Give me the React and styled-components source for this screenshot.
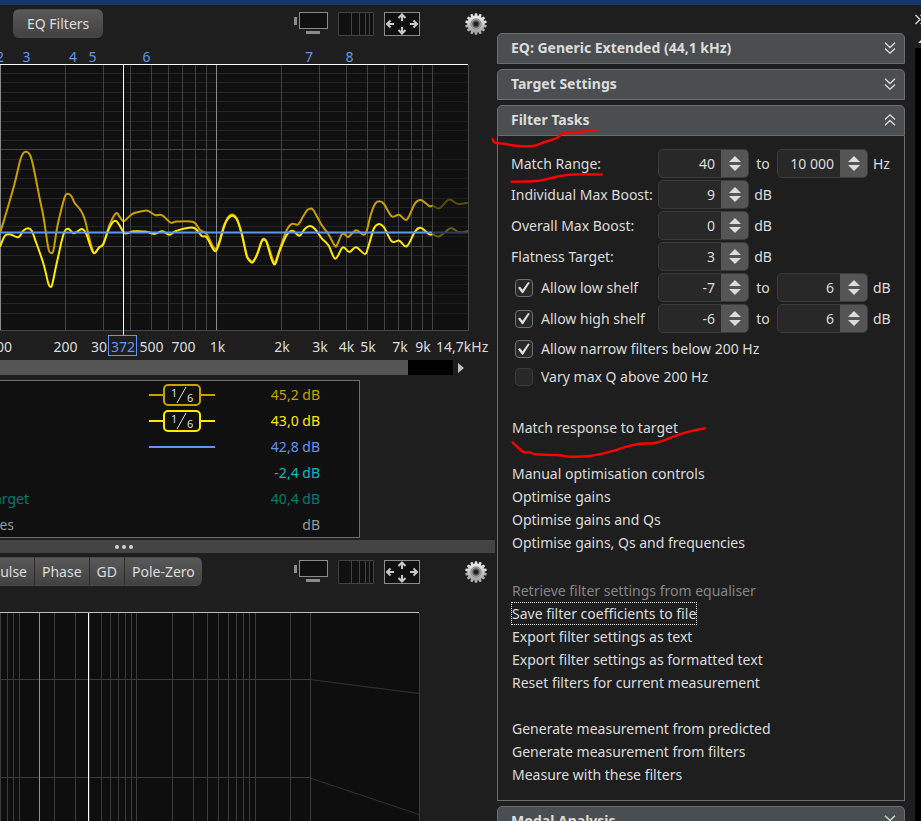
import React, { useState } from 'react'
import styled, { createGlobalStyle } from 'styled-components'

const GlobalStyle = createGlobalStyle`
*{
  box-sizing: border-box;
}
html,body{
  margin: 0;
  padding: 0;
  background: #1e1e1e;
}
body,button,input,table{
  font-family: "Noto Sans", "Open Sans", sans-serif;
  font-size: 14px;
  line-height: 20px;
  color: #dcdcdc;
}
button{
  border: none;
  background: none;
  padding: 0;
  cursor: pointer;
}
svg{
  display: block;
}
`

const Page = styled.div`
height: 100vh;
overflow: hidden;
display: flex;
flex-direction: column;
`

const TitleStrip = styled.div`
flex: 0 0 5px;
background: #163a61;
`

const Workspace = styled.div`
flex: 1;
min-height: 0;
display: flex;
`

const Graphs = styled.main`
flex: 1;
min-width: 0;
display: flex;
flex-direction: column;
overflow: hidden;
`

const Toolbar = styled.div`
flex: 0 0 40px;
display: flex;
align-items: flex-start;
justify-content: space-between;
padding: 4px 10px 0 ${props => props.indent || '0'};
`

const ButtonGroup = styled.div`
display: flex;
overflow: hidden;
border-radius: ${props => props.joined ? '0 6px 6px 0' : '6px'};
`

const GraphButton = styled.button`
height: 29px;
padding: ${props => props.wide ? '0 14px' : '0 7px'};
background: linear-gradient(#595959, #414141);
border: 1px solid #4a4a4a;
border-width: 1px 0;
white-space: nowrap;

& + &{
  border-left: 1px solid #2c2c2c;
}
`

/* the first tab is scrolled partly out of view */
const CutButton = styled(GraphButton)`
width: 34px;
display: flex;
align-items: center;
justify-content: flex-end;
`

const ToolIcons = styled.div`
display: flex;
align-items: center;
gap: 10px;
padding-top: 3px;
`

const IconButton = styled.button`
display: block;
margin-left: ${props => props.apart ? '35px' : '0'};
`

const ChartSvg = styled.svg`
flex: none;
width: 100%;
height: auto;
font-family: "Noto Sans", "Open Sans", sans-serif;
font-size: 14px;
`

const ScrollRow = styled.div`
flex: none;
display: flex;
align-items: center;
height: 15px;
margin: 2px 33px 5px 0;
gap: 5px;
`

const ScrollTrack = styled.div`
flex: 1;
height: 15px;
background: #000;
`

const ScrollThumb = styled.div`
width: 90%;
height: 100%;
background: #555;
`

const Legend = styled.table`
flex: none;
align-self: flex-start;
width: 360px;
height: 158px;
border: 1px solid #6e6e6e;
border-left: none;
background: #101010;
border-spacing: 0;

td{
  height: 26px;
  padding: 2px 0 0;
}
`

const LegendName = styled.td`
width: 149px;
color: ${props => props.color};

span{
  display: flex;
  justify-content: flex-end;
  width: ${props => props.visible || 0}px;
}
`

const LegendSwatch = styled.td`
width: 66px;
`

const LegendValue = styled.td`
color: ${props => props.color};
text-align: right;

&&{
  padding-right: 39px;
}
`

const Splitter = styled.div`
flex: 0 0 13px;
display: flex;
align-items: center;
gap: 3px;
margin: 2px 2px 0 0;
padding-left: 115px;
background: #444;
`

const Dot = styled.i`
width: 4px;
height: 4px;
border-radius: 50%;
background: #d2d2d2;
`

const Side = styled.aside`
position: relative;
flex: 0 0 424px;
display: flex;
gap: 10px;
`

const Sections = styled.div`
flex: 1;
display: flex;
flex-direction: column;
gap: 5px;
padding-top: 28px;
`

const SectionHeader = styled.button`
flex: none;
width: 100%;
height: 31px;
display: flex;
align-items: center;
justify-content: space-between;
padding: 0 8px 2px 13px;
background: #4b4e50;
border: 1px solid #6d6d6d;
border-radius: 5px 5px 0 0;
font-weight: 700;
`

const SectionBody = styled.div`
padding: 13px 4px 14px 13px;
border: 1px solid #6d6d6d;
border-top: none;
`

const Fields = styled.div`
display: grid;
grid-template-columns: 147px 91px 28px 91px 1fr;
row-gap: 2px;
align-items: center;
`

const FieldLabel = styled.label`
white-space: nowrap;
`

const Mid = styled.span`
text-align: center;
`

const Unit = styled.span`
grid-column: 5;
padding-left: 5px;
`

const SpinBox = styled.div`
display: flex;
height: 29px;
border: 1px solid #3c3c3c;
border-radius: 5px;
background: #282828;
overflow: hidden;
`

const SpinInput = styled.input`
flex: 1;
min-width: 0;
border: none;
outline: none;
background: transparent;
padding: 0 6px 0 0;
text-align: right;
`

const Steps = styled.div`
width: 27px;
display: flex;
flex-direction: column;
align-items: center;
justify-content: center;
gap: 3px;
background: #555;
`

const Checks = styled.div`
padding-top: 2px;
`

const CheckRow = styled.div`
display: flex;
align-items: center;
gap: 8px;
height: ${props => props.tall ? '29px' : '28px'};
padding-left: 4px;
white-space: nowrap;
`

const CheckBox = styled.input`
appearance: none;
flex: none;
width: 18px;
height: 18px;
margin: 0;
border: 1px solid ${props => props.checked ? '#707070' : '#3a3a3a'};
border-radius: 4px;
background: #282828;
display: grid;
place-content: center;

&:checked::after{
  content: "";
  width: 12px;
  height: 12px;
  background: #dcdcdc;
  clip-path: polygon(0 52%, 16% 42%, 38% 68%, 84% 4%, 98% 10%, 42% 98%, 34% 98%);
}
`

const TaskGroup = styled.div`
display: flex;
flex-direction: column;
align-items: flex-start;
margin-top: ${props => props.spaced ? '25px' : '23px'};
`

const Task = styled.button`
height: 23px;
padding: 0 1px;
white-space: nowrap;

&:disabled{
  color: #858585;
}
`

const FocusedTask = styled(Task)`
outline: 1px dotted #fff;
outline-offset: -1px;
`

const Rail = styled.div`
flex: 0 0 6px;
display: flex;
flex-direction: column;
align-items: flex-start;
overflow: hidden;
`

const RailTrack = styled.div`
flex: 1;
width: 100%;
background: #000;
`

const Pen = styled.svg`
position: absolute;
left: -7px;
top: 0;
pointer-events: none;
`

const markers = [
  [26.5, '3'], [73, '4'], [92.5, '5'], [146.5, '6'], [309, '7'], [349.5, '8'],
]

const ticks = [
  [65.5, '200'], [151.5, '500'], [183.5, '700'], [217.5, '1k'], [282, '2k'], [320, '3k'],
  [346.5, '4k'], [368, '5k'], [400, '7k'], [423, '9k'],
]

const gridX = [65, 103, 130, 151, 168, 182, 195, 206, 281, 319, 346, 367, 384, 398, 411, 422, 432]

const gridX2 = [
  0, 7, 13, 19, 54, 75, 89, 101, 110, 118, 125, 131, 136, 172, 193, 207, 218, 228, 236, 243,
  249, 255, 290, 310, 419,
]

const gridY = Array.from({ length: 26 }, (_, k) => Math.round(72.5 + 9.62 * k))

const measured = [
  [0, 233], [5, 217], [10, 200], [15, 182], [20, 161], [23, 153.5], [26.5, 151.7], [30, 155], [33, 165],
  [40, 200], [43.5, 217], [48.3, 248], [51, 252.7], [53.5, 250], [57.3, 226.7], [63.3, 201.7],
  [65.7, 195], [68, 193.7], [71.3, 196], [74.7, 203], [81, 210.7], [85, 220], [89.3, 238.3],
  [94, 252.7], [99.3, 247], [103.3, 244], [110, 224], [116, 213.3], [120, 217.3], [124, 221.3],
  [131.7, 214.3], [141.7, 211.3], [147.7, 210.7], [155, 215], [162.3, 215.3], [170.7, 222.7],
  [176.7, 221.5], [193.3, 222], [200, 230], [206.7, 234], [214.3, 248.3], [218.3, 244], [225, 223],
  [231, 214.7], [236.7, 218.3], [241.7, 233.3], [246.7, 255], [250, 260], [252.7, 261.5],
  [256.7, 255], [261.7, 240.7], [264, 238.7], [266.7, 241.7], [274, 262.7], [276, 260],
  [281.7, 243.3], [286, 231.7], [289.3, 226], [292.7, 223.7], [298.3, 224.3], [303.3, 216],
  [307.3, 210], [310, 208.7], [313.3, 210], [321.7, 225], [328.3, 234], [335, 246], [337.3, 244.3],
  [341.7, 234.5], [345, 234.3], [348.3, 237], [356, 230.3], [363.3, 234.7], [366.7, 231],
  [370.7, 215], [375, 204], [379.3, 201.3], [384, 204], [391.7, 216.3], [399.3, 214.7],
  [406.7, 219.7], [415, 203.3], [420.7, 200], [426.7, 204], [430, 206.3], [432.7, 205.7],
]
const measuredTail = [
  [432.7, 205.7], [439.3, 208.3], [446.7, 201], [450.7, 199.7], [458.3, 204], [468, 202.7],
]

const predicted = [
  [0, 246.7], [5, 235.7], [10, 234.3], [18.3, 237.3], [23.3, 230.7], [28, 228.3], [31.7, 230.7],
  [35, 239.3], [43.3, 263.3], [48.3, 283.3], [50.3, 286.7], [52.3, 284], [56.7, 263.3],
  [63.3, 235], [68, 228.7], [74, 233.3], [81.7, 229], [86, 233.3], [90, 245], [94, 253.3],
  [99.3, 247.3], [103.3, 244], [108.3, 230], [112.7, 222.3], [116, 221], [119.3, 225],
  [125, 233.3], [133.3, 231.3], [146.7, 231.7], [154.3, 234], [162.3, 231.3], [169.3, 234.7],
  [176.7, 230.7], [193.3, 227.7], [201.7, 236], [206.7, 237.3], [214.3, 250.7], [218.3, 246],
  [225, 224], [231, 216], [236.7, 219.3], [241.7, 234], [246.7, 256], [250, 261.3],
  [252.7, 262.3], [256.7, 255.7], [261.7, 241.7], [264, 239.7], [266.7, 242.7], [274, 264.3],
  [280, 250], [286.7, 235], [292.7, 230.7], [299.3, 235.7], [305, 228.7], [310, 226], [315, 229],
  [321.7, 238.3], [328.3, 245], [335.3, 258.7], [342.7, 247.3], [349.3, 252], [356, 247.3],
  [365, 254], [368.3, 246.7], [374, 228.3], [379, 224], [384, 227.3], [391.7, 241.3],
  [399.3, 240.7], [406.7, 246.3], [415, 231.7], [420.7, 227.7], [429.3, 234.3], [432.7, 234],
]
const predictedTail = [
  [432.7, 234], [439.3, 236.3], [450.7, 228.3], [459, 232.3], [468, 231],
]

// smooth curve through the points
const spline = (pts) => {
  let d = `M${pts[0][0]} ${pts[0][1]}`
  for (let i = 0; i < pts.length - 1; i++) {
    const a = pts[i - 1] || pts[i]
    const b = pts[i]
    const c = pts[i + 1]
    const e = pts[i + 2] || c
    d += `C${b[0] + (c[0] - a[0]) / 6} ${b[1] + (c[1] - a[1]) / 6} ${c[0] - (e[0] - b[0]) / 6} ${c[1] - (e[1] - b[1]) / 6} ${c[0]} ${c[1]}`
  }
  return d
}

const ResponseChart = () => (
  <ChartSvg viewBox="0 45 497 313" role="img" aria-label="Frequency response">
    <g fill="#6495ed">
      <text x="4" y="62" textAnchor="end">2</text>
      {markers.map(([x, t]) => <text key={t} x={x} y="62" textAnchor="middle">{t}</text>)}
    </g>
    <rect x="0" y="64" width="469" height="267" fill="#101010" />
    <g shapeRendering="crispEdges" strokeWidth="1">
      {gridY.map((y, i) => i % 10 === 8
        ? <path key={y} d={`M0 ${y + .5}H432`} stroke="#454545" />
        : <g key={y}>
            <path d={`M0 ${y + .5}H432`} stroke="#242424" />
            <path d={`M432 ${y + .5}H468`} stroke="#1b1b1b" />
          </g>)}
      {gridX.map(x => <path key={x} d={`M${x + .5} 65V330`} stroke="#424242" />)}
      <path d="M.5 65V330M216.5 65V330" stroke="#8a8a8a" />
      <path d="M0 330.5H468.5V65" fill="none" stroke="#484848" />
      <path d="M0 64.5H468" stroke="#fff" />
    </g>
    <g fill="none" strokeWidth="2">
      <path d={spline(measured)} stroke="#c8a000" />
      <path d={spline(measuredTail)} stroke="#5b4b08" />
      <path d={spline(predicted)} stroke="#ffe900" />
      <path d={spline(predictedTail)} stroke="#6a6308" />
      <path d="M0 232.5H432" stroke="#6495ed" />
      <path d="M432 232.5H468" stroke="#2c3d5e" />
    </g>
    <path d="M123.5 65V335" stroke="#fff" shapeRendering="crispEdges" />
    <g fill="#dcdcdc">
      <text x="12" y="352" textAnchor="end">00</text>
      <text x="91" y="352">30</text>
      {ticks.map(([x, t]) => <text key={t} x={x} y="352" textAnchor="middle">{t}</text>)}
      <text x="436" y="352">14,7kHz</text>
    </g>
    <rect x="108.5" y="335.5" width="28" height="20" fill="#1e1e1e" stroke="#6495ed" />
    <text x="123" y="352" textAnchor="middle" fill="#6495ed">372</text>
  </ChartSvg>
)

const FilterChart = () => (
  <ChartSvg viewBox="0 593 497 240" role="img" aria-label="Filter response">
    <rect x="0" y="612" width="420" height="221" fill="#0e0e0e" />
    <g shapeRendering="crispEdges">
      {gridX2.map(x => <path key={x} d={`M${x + .5} 613V833`} stroke="#3b3b3b" />)}
      <path d="M0 679.5H310M0 777.5H310" stroke="#3b3b3b" />
      <path d="M39.5 613V833" stroke="#6495ed" />
      <path d="M88.5 613V833" stroke="#fff" />
      <path d="M0 612.5H419" stroke="#bdbdbd" />
    </g>
    <path d="M310 679.5L419 693.5M310 778L419 814.5" stroke="#333" />
  </ChartSvg>
)

const Gear = () => (
  <svg width="22" height="22" viewBox="-11 -11 22 22">
    <defs>
      <linearGradient id="steel" x1="0" y1="0" x2="0" y2="1">
        <stop offset="0" stopColor="#f0f0f0" />
        <stop offset="1" stopColor="#a2a2a2" />
      </linearGradient>
    </defs>
    {Array.from({ length: 14 }, (_, i) => (
      <path key={i} d="M-1.5 -8L-1.1 -10.8H1.1L1.5 -8Z" fill={i > 3 && i < 11 ? '#b0b0b0' : '#e4e4e4'} transform={`rotate(${i * 360 / 14})`} />
    ))}
    <circle r="8.6" fill="url(#steel)" />
    <circle r="5.2" fill="#a6a6a6" stroke="#8a8a8a" />
    <circle r="3" fill="#1e1e1e" stroke="#565656" strokeWidth="1.4" />
  </svg>
)

const GraphTools = () => (
  <ToolIcons>
    <IconButton aria-label="Capture graph">
      <svg width="34" height="24">
        <path d="M0 5h3v8H0zM12 19h14v3H12z" fill="#8a8a8a" />
        <rect x="5.5" y=".5" width="28" height="16" fill="#101010" stroke="#8a8a8a" />
      </svg>
    </IconButton>
    <IconButton aria-label="Frequency axis">
      <svg width="36" height="24">
        <path d="M.5 .5h35v23H.5zM13.5 0v24M21.5 0v24M27.5 0v24M31.5 0v24" fill="#101010" stroke="#424242" />
      </svg>
    </IconButton>
    <IconButton aria-label="Graph limits">
      <svg width="36" height="24">
        <rect x=".5" y=".5" width="35" height="23" fill="#101010" stroke="#8a8a8a" />
        <g fill="none" stroke="#c8c8c8" strokeWidth="2">
          <path d="M18 9V3M14.5 6L18 2.5L21.5 6" />
          <path d="M18 15v6M14.5 18L18 21.5L21.5 18" />
          <path d="M10 12H3M6.5 8.5L3 12L6.5 15.5" />
          <path d="M26 12h7M29.5 8.5L33 12L29.5 15.5" />
        </g>
      </svg>
    </IconButton>
    <IconButton apart aria-label="Graph controls"><Gear /></IconButton>
  </ToolIcons>
)

const Smoothing = ({ color }) => (
  <svg width="66" height="24" fontSize="11">
    <path d="M0 12h15M51 12h15" stroke={color} strokeWidth="2" />
    <rect x="15" y="2" width="36" height="20" rx="4" fill="none" stroke={color} strokeWidth="2" />
    <path d="M28 20L37 4" stroke="#dcdcdc" />
    <text x="22" y="14" fill="#dcdcdc">1</text>
    <text x="38" y="19" fill="#dcdcdc">6</text>
  </svg>
)

const Line = ({ color }) => (
  <svg width="66" height="24"><path d="M0 12h66" stroke={color} strokeWidth="2" /></svg>
)

const traces = [
  { value: '45,2 dB', color: '#c8a000', swatch: Smoothing },
  { value: '43,0 dB', color: '#ffe900', swatch: Smoothing },
  { value: '42,8 dB', color: '#6495ed', swatch: Line },
  { value: '-2,4 dB', color: '#00bfbf' },
  { value: '40,4 dB', color: '#007d73', name: 'arget', visible: 29 },
  { value: 'dB', color: '#9a9a9a', name: 'es', visible: 14 },
]

const Chevrons = ({ up }) => (
  <svg width="12" height="12" fill="none" stroke="#dcdcdc" strokeWidth="1.3">
    {up
      ? <path d="M1 5.5L6 .8L11 5.5M1 11.2L6 6.5L11 11.2" />
      : <path d="M1 .8L6 5.5L11 .8M1 6.5L6 11.2L11 6.5" />}
  </svg>
)

const Section = ({ title, open, children }) => (
  <section>
    <SectionHeader aria-expanded={!!open}>
      {title}
      <Chevrons up={open} />
    </SectionHeader>
    {open && <SectionBody>{children}</SectionBody>}
  </section>
)

const Spinner = ({ id, label, start }) => {
  const [value, setValue] = useState(start)
  const step = (n) => setValue(v => String(Number(v.replace(' ', '')) + n))

  return (
    <SpinBox>
      <SpinInput id={id} aria-label={label} value={value} onChange={e => setValue(e.target.value)} />
      <Steps>
        <button aria-label={`${label} up`} onClick={() => step(1)}>
          <svg width="12" height="6"><path d="M0 6L6 0L12 6Z" fill="#dcdcdc" /></svg>
        </button>
        <button aria-label={`${label} down`} onClick={() => step(-1)}>
          <svg width="12" height="6"><path d="M0 0L6 6L12 0Z" fill="#dcdcdc" /></svg>
        </button>
      </Steps>
    </SpinBox>
  )
}

const Check = ({ id, label, on, tall }) => {
  const [checked, setChecked] = useState(!!on)

  return (
    <CheckRow tall={tall}>
      <CheckBox type="checkbox" id={id} checked={checked} onChange={() => setChecked(!checked)} />
      <label htmlFor={id}>{label}</label>
    </CheckRow>
  )
}

const FilterTasks = () => (
  <>
    <Fields>
      <FieldLabel htmlFor="range">Match Range:</FieldLabel>
      <Spinner id="range" label="Match range start" start="40" />
      <Mid>to</Mid>
      <Spinner label="Match range end" start="10 000" />
      <Unit>Hz</Unit>

      <FieldLabel htmlFor="individual">Individual Max Boost:</FieldLabel>
      <Spinner id="individual" label="Individual max boost" start="9" />
      <Mid>dB</Mid>
      <Unit />

      <FieldLabel htmlFor="overall">Overall Max Boost:</FieldLabel>
      <Spinner id="overall" label="Overall max boost" start="0" />
      <Mid>dB</Mid>
      <Unit />

      <FieldLabel htmlFor="flatness">Flatness Target:</FieldLabel>
      <Spinner id="flatness" label="Flatness target" start="3" />
      <Mid>dB</Mid>
      <Unit />

      <Check tall on id="low" label="Allow low shelf" />
      <Spinner label="Low shelf minimum" start="-7" />
      <Mid>to</Mid>
      <Spinner label="Low shelf maximum" start="6" />
      <Unit>dB</Unit>

      <Check tall on id="high" label="Allow high shelf" />
      <Spinner label="High shelf minimum" start="-6" />
      <Mid>to</Mid>
      <Spinner label="High shelf maximum" start="6" />
      <Unit>dB</Unit>
    </Fields>
    <Checks>
      <Check on id="narrow" label="Allow narrow filters below 200 Hz" />
      <Check id="vary" label="Vary max Q above 200 Hz" />
    </Checks>

    <TaskGroup spaced>
      <Task>Match response to target</Task>
    </TaskGroup>
    <TaskGroup>
      <Task>Manual optimisation controls</Task>
      <Task>Optimise gains</Task>
      <Task>Optimise gains and Qs</Task>
      <Task>Optimise gains, Qs and frequencies</Task>
    </TaskGroup>
    <TaskGroup spaced>
      <Task disabled>Retrieve filter settings from equaliser</Task>
      <FocusedTask>Save filter coefficients to file</FocusedTask>
      <Task>Export filter settings as text</Task>
      <Task>Export filter settings as formatted text</Task>
      <Task>Reset filters for current measurement</Task>
    </TaskGroup>
    <TaskGroup>
      <Task>Generate measurement from predicted</Task>
      <Task>Generate measurement from filters</Task>
      <Task>Measure with these filters</Task>
    </TaskGroup>
  </>
)

const penStrokes = [
  [[492.7, 139], [494.7, 142.7], [504, 143.7], [515, 145.7], [533, 146], [545, 142], [556.7, 138], [563, 133.5], [578, 132.3], [586.7, 130.3], [596, 130.7]],
  [[511.7, 181.7], [536.7, 181], [556.7, 176.7], [573, 174.5], [601.7, 174.5]],
  [[512.7, 442.3], [523, 451.7], [530, 452.3], [535, 454.3], [556.7, 455], [570, 456.7], [590, 456], [606.7, 452.7], [626.7, 446.7], [640, 443.7], [653, 443.3], [663, 440.7], [676.7, 435.3], [693, 430.7], [705, 428.3]],
]

const App = () => {
  return (
    <Page>
      <GlobalStyle />
      <TitleStrip />
      <Workspace>
        <Graphs>
          <Toolbar indent="13px">
            <ButtonGroup>
              <GraphButton wide>EQ Filters</GraphButton>
            </ButtonGroup>
            <GraphTools />
          </Toolbar>
          <ResponseChart />
          <ScrollRow>
            <ScrollTrack><ScrollThumb /></ScrollTrack>
            <svg width="6" height="10"><path d="M0 0L6 5L0 10Z" fill="#c0c0c0" /></svg>
          </ScrollRow>
          <Legend>
            <tbody>
              {traces.map(({ value, color, swatch: Swatch, name, visible }) => (
                <tr key={value}>
                  <LegendName color={color} visible={visible}><span>{name}</span></LegendName>
                  <LegendSwatch>{Swatch && <Swatch color={color} />}</LegendSwatch>
                  <LegendValue color={color}>{value}</LegendValue>
                </tr>
              ))}
            </tbody>
          </Legend>
          <Splitter><Dot /><Dot /><Dot /></Splitter>
          <Toolbar>
            <ButtonGroup joined>
              <CutButton>ulse</CutButton>
              <GraphButton>Phase</GraphButton>
              <GraphButton>GD</GraphButton>
              <GraphButton>Pole-Zero</GraphButton>
            </ButtonGroup>
            <GraphTools />
          </Toolbar>
          <FilterChart />
        </Graphs>

        <Side>
          <Sections>
            <Section title="EQ: Generic Extended (44,1 kHz)" />
            <Section title="Target Settings" />
            <Section title="Filter Tasks" open>
              <FilterTasks />
            </Section>
            <Section title="Modal Analysis" />
          </Sections>
          <Rail>
            <svg width="12" height="43" viewBox="915 5 12 43">
              <path d="M915.5 15L920 19.5L915.5 24M920.5 15L925 19.5L920.5 24" fill="none" stroke="#dcdcdc" strokeWidth="1.3" />
              <path d="M918 43L923 38L928 43Z" fill="#dcdcdc" />
            </svg>
            <RailTrack />
          </Rail>
          <Pen width="240" height="470" viewBox="490 5 240 470">
            {penStrokes.map((s, i) => (
              <path key={i} d={spline(s)} fill="none" stroke="#f00" strokeWidth="2.4" strokeLinecap="round" />
            ))}
          </Pen>
        </Side>
      </Workspace>
    </Page>
  )
}

export default App
